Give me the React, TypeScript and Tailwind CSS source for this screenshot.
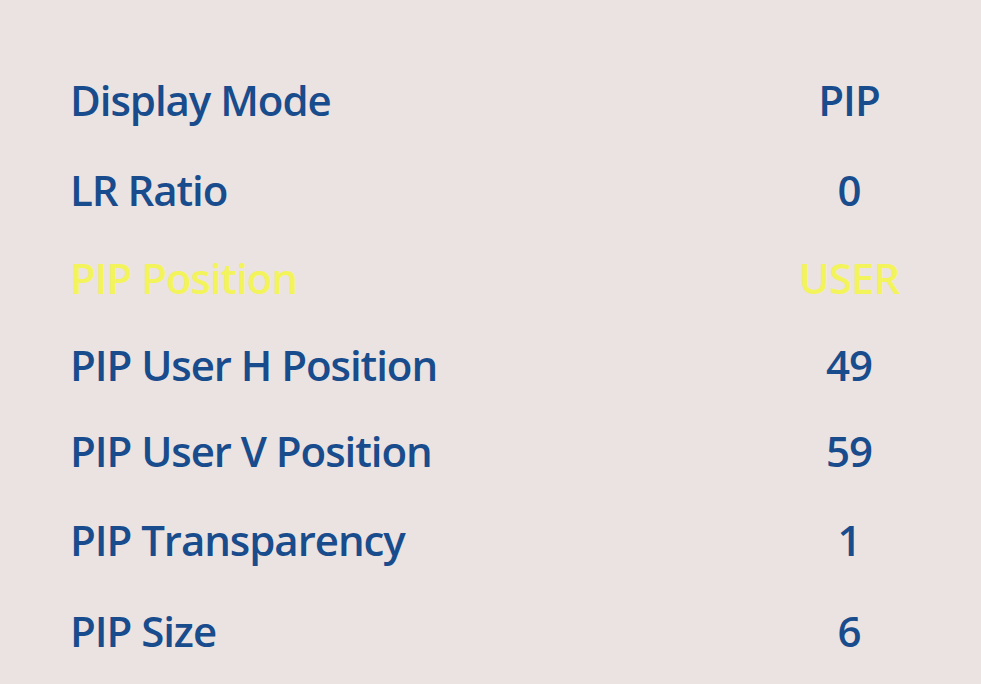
const rows: { label: string; value: string; h: string; active?: boolean }[] = [
  { label: "Display Mode", value: "PIP", h: "h-[92px]" },
  { label: "LR Ratio", value: "0", h: "h-[88px]" },
  { label: "PIP Position", value: "USER", h: "h-[88px]", active: true },
  { label: "PIP User H Position", value: "49", h: "h-[86px]" },
  { label: "PIP User V Position", value: "59", h: "h-[86px]" },
  { label: "PIP Transparency", value: "1", h: "h-[93px]" },
  { label: "PIP Size", value: "6", h: "h-[89px]" },
];

export default function App() {
  return (
    <div className="h-[684px] w-[981px] overflow-hidden bg-[#ebe3e1] pt-[53px] pl-[70px] pr-[32px] font-['Open_Sans',sans-serif]">
      {rows.map((r) => (
        <div
          key={r.label}
          className={
            "grid grid-cols-[1fr_200px] items-center text-[42px] font-semibold tracking-[-0.025em] " +
            r.h +
            " " +
            (r.active ? "text-[#f3f35c]" : "text-[#184c8c]")
          }
        >
          <span>{r.label}</span>
          <span className="text-center">{r.value}</span>
        </div>
      ))}
    </div>
  );
}
